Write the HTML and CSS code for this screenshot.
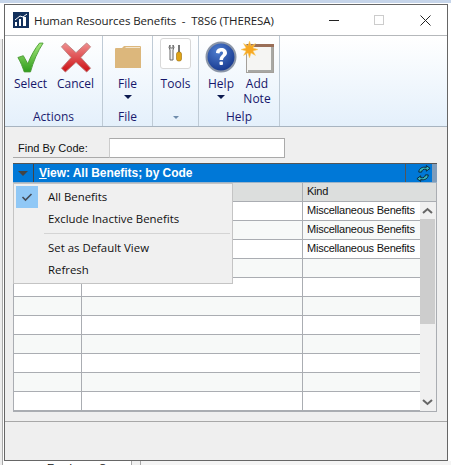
FILE: index.html
```html
<!DOCTYPE html>
<html lang="en">
<head>
    <meta charset="UTF-8">
    <meta name="viewport" content="width=device-width, initial-scale=1.0">
    <title>Human Resources Benefits</title>
    <link rel="stylesheet" href="styles.css">
</head>
<body>
    <div class="behind-top"></div>
    <div class="behind-left"></div>
    <div class="behind-bottom">
        <span class="behind-label">Employee S</span>
    </div>

    <div class="window">
        <div class="titlebar">
            <svg class="app-icon" width="16" height="16" viewBox="0 0 16 16">
                <rect width="16" height="16" fill="#12305c"/>
                <path d="M2 14V10H4V14ZM6 14V7H8V14ZM10 14V5H13V14Z" fill="#fff"/>
                <path d="M2 8L7 4L10 5L14 2" stroke="#fff" fill="none"/>
            </svg>
            <div class="title">Human Resources Benefits &nbsp;-&nbsp; T8S6 (THERESA)</div>
            <div class="win-buttons">
                <span class="win-min"></span>
                <span class="win-max"></span>
                <svg class="win-close" width="11" height="11" viewBox="0 0 11 11"><path d="M.5.5L10.5 10.5M10.5.5L.5 10.5" stroke="#222" fill="none"/></svg>
            </div>
        </div>

        <div class="ribbon">
            <div class="group group-actions">
                <div class="group-items">
                    <div class="tool">
                        <div class="tool-icon">
                            <svg width="27" height="31" viewBox="0 0 30 34">
                                <defs>
                                    <linearGradient id="green" x1="0" y1="0" x2="0" y2="1">
                                        <stop offset="0" stop-color="#a6ea7c"/>
                                        <stop offset="1" stop-color="#2f9c1c"/>
                                    </linearGradient>
                                </defs>
                                <path d="M1 17L7 15L12 24C15 16 20 7 25 1L29 1C23 10 18 22 15 33L8 33C6 27 4 22 1 17Z" fill="url(#green)" stroke="#4a9a34"/>
                            </svg>
                        </div>
                        <span>Select</span>
                    </div>
                    <div class="tool">
                        <div class="tool-icon">
                            <svg width="32" height="31" viewBox="0 0 32 32">
                                <defs>
                                    <linearGradient id="red" x1="0" y1="0" x2="0" y2="1">
                                        <stop offset="0" stop-color="#f09090"/>
                                        <stop offset="1" stop-color="#cc0f14"/>
                                    </linearGradient>
                                </defs>
                                <path d="M5 1L16 11L27 1L31 5L21 16L31 27L27 31L16 21L5 31L1 27L11 16L1 5Z" fill="url(#red)" stroke="#c08080" stroke-linejoin="round"/>
                            </svg>
                        </div>
                        <span>Cancel</span>
                    </div>
                </div>
                <div class="group-label">Actions</div>
            </div>

            <div class="group group-file">
                <div class="group-items">
                    <div class="tool">
                        <div class="tool-icon">
                            <svg width="28" height="24" viewBox="0 0 28 24">
                                <path d="M1 4Q1 3 2 3H8L10 1H26Q27 1 27 2V23H1Z" fill="#dcb77c"/>
                                <path d="M11 3L12 2H26V3Z" fill="#f3e6cf"/>
                            </svg>
                        </div>
                        <span>File</span>
                        <i class="caret"></i>
                    </div>
                </div>
                <div class="group-label">File</div>
            </div>

            <div class="group group-tools">
                <div class="group-items">
                    <div class="tool">
                        <div class="tool-icon">
                            <div class="tools-box">
                                <svg width="18" height="18" viewBox="0 0 18 18">
                                    <path d="M3 1V4H6V1Q8 3 6 6V16H3V6Q1 3 3 1Z" fill="#f4f4f4" stroke="#666"/>
                                    <rect x="11" y="1" width="2" height="7" fill="#777"/>
                                    <rect x="9.500" y="8" width="5" height="9" rx="2" fill="#e0a414" stroke="#9a6c0a" stroke-width=".6"/>
                                </svg>
                            </div>
                        </div>
                        <span>Tools</span>
                    </div>
                </div>
                <div class="group-label"><i class="caret caret-small"></i></div>
            </div>

            <div class="group group-help">
                <div class="group-items">
                    <div class="tool tool-help">
                        <div class="tool-icon">
                            <svg width="32" height="32" viewBox="0 0 32 32">
                                <defs>
                                    <radialGradient id="blue" cx=".4" cy=".3" r=".8">
                                        <stop offset="0" stop-color="#4f7fd0"/>
                                        <stop offset="1" stop-color="#0f2f86"/>
                                    </radialGradient>
                                </defs>
                                <circle cx="16" cy="16" r="14.500" fill="url(#blue)" stroke="#8b96a8" stroke-width="2"/>
                                <path d="M11 12C11 8 14 7 16.500 7C19.500 7 22 9 22 12C22 15 18 16 18 19H14.500C14.500 15 18 14 18 12C18 11 17.500 10.500 16.500 10.500C15 10.500 14.500 11.500 14.500 12.500Z" fill="#fff"/>
                                <rect x="14.500" y="20.500" width="3.500" height="3.500" rx="1" fill="#fff"/>
                            </svg>
                        </div>
                        <span>Help</span>
                        <i class="caret"></i>
                    </div>
                    <div class="tool tool-note">
                        <div class="tool-icon">
                            <svg width="33" height="32" viewBox="0 0 33 32">
                                <rect x="5.500" y="3.500" width="27" height="28" fill="#f5f5f3" stroke="#a4a09a" stroke-width="1"/>
                                <path d="M30 6H32V31H7V29H30Z" fill="#a8a8a4"/>
                                <rect x="6" y="3" width="27" height="3" fill="#9a6f58"/>
                                <path d="M8.500 0L10 5L14.500 2.500L12 7L17 8.500L12 10L14.500 14.500L10 12L8.500 17L7 12L2.500 14.500L5 10L0 8.500L5 7L2.500 2.500L7 5Z" fill="#f7a823" stroke="#f9cf6b" stroke-width=".5"/>
                            </svg>
                        </div>
                        <span>Add<br>Note</span>
                    </div>
                </div>
                <div class="group-label">Help</div>
            </div>
        </div>

        <div class="content">
            <div class="find-row">
                <label class="find-label">Find By Code:</label>
                <div class="find-input"></div>
            </div>

            <div class="grid-panel">
                <div class="view-bar">
                    <div class="view-arrow"><i></i></div>
                    <div class="view-title"><u>V</u>iew: All Benefits; by Code</div>
                    <div class="view-refresh">
                        <svg width="15" height="17" viewBox="0 0 16 17">
                            <path d="M3 7C3 3 7 1 11 2L11 0L15 3L11 6V4C8 3.500 6 5 6 7Z" fill="#36b4bc" stroke="#0c2233"/>
                            <path d="M13 10C13 14 9 16 5 15L5 17L1 14L5 11V13C8 13.500 10 12 10 10Z" fill="#36b4bc" stroke="#0c2233"/>
                        </svg>
                    </div>
                </div>
                <div class="grid-body">
                    <div class="grid-main">
                        <div class="grid-row grid-head">
                            <div></div><div></div><div class="cell-pad">Kind</div>
                        </div>
                        <div class="grid-row"><div></div><div></div><div class="cell-pad">Miscellaneous Benefits</div></div>
                        <div class="grid-row alt"><div></div><div></div><div class="cell-pad">Miscellaneous Benefits</div></div>
                        <div class="grid-row"><div></div><div></div><div class="cell-pad">Miscellaneous Benefits</div></div>
                        <div class="grid-row alt"><div></div><div></div><div></div></div>
                        <div class="grid-row"><div></div><div></div><div></div></div>
                        <div class="grid-row alt"><div></div><div></div><div></div></div>
                        <div class="grid-row"><div></div><div></div><div></div></div>
                        <div class="grid-row alt"><div></div><div></div><div></div></div>
                        <div class="grid-row"><div></div><div></div><div></div></div>
                        <div class="grid-row alt"><div></div><div></div><div></div></div>
                        <div class="grid-row"><div></div><div></div><div></div></div>
                    </div>
                    <div class="scrollbar">
                        <div class="scroll-head"></div>
                        <div class="scroll-btn">
                            <svg width="11" height="7" viewBox="0 0 11 7"><path d="M1 6L5.500 2L10 6" stroke="#666" stroke-width="2" fill="none"/></svg>
                        </div>
                        <div class="scroll-thumb"></div>
                        <div class="scroll-track"></div>
                        <div class="scroll-btn">
                            <svg width="11" height="7" viewBox="0 0 11 7"><path d="M1 1L5.500 5L10 1" stroke="#666" stroke-width="2" fill="none"/></svg>
                        </div>
                    </div>
                </div>

                <div class="view-menu">
                    <div class="menu-item">
                        <div class="menu-check">
                            <svg width="12" height="10" viewBox="0 0 12 10"><path d="M1.500 5L4.500 8L10.500 2" stroke="#444c58" stroke-width="1.600" fill="none"/></svg>
                        </div>
                        <span>All Benefits</span>
                    </div>
                    <div class="menu-item"><div class="menu-gutter"></div><span>Exclude Inactive Benefits</span></div>
                    <div class="menu-sep"></div>
                    <div class="menu-item"><div class="menu-gutter"></div><span>Set as Default View</span></div>
                    <div class="menu-item"><div class="menu-gutter"></div><span>Refresh</span></div>
                </div>
            </div>
        </div>

        <div class="footer"></div>
    </div>
</body>
</html>
```

FILE: styles.css
```css
html, body {
    margin: 0;
    padding: 0;
}
body {
    position: relative;
    width: 451px;
    height: 465px;
    overflow: hidden;
    background-color: #fff;
    font-family: 'Liberation Sans', Arial, sans-serif;
    font-size: 12px;
    color: #111;
    box-sizing: border-box;
    padding: 4px 3px 4px 4px;
}
/* bits of the window underneath */
.behind-top {
    position: absolute;
    left: 0;
    top: 0;
    width: 100%;
    height: 3px;
    background-color: #c6d5ea;
}
.behind-left {
    position: absolute;
    left: 0;
    top: 39px;
    width: 3px;
    height: 426px;
    box-sizing: border-box;
    background-color: #ededed;
    border-right: 1px solid #a8a8a8;
}
.behind-bottom {
    position: absolute;
    left: 4px;
    top: 461px;
    width: 447px;
    height: 4px;
    overflow: hidden;
    background: linear-gradient(to right, #fff 127px, #a8a8a8 127px, #a8a8a8 128px, #f0f0f0 128px, #f0f0f0 136px, #a8a8a8 136px, #a8a8a8 137px, #f4f4f4 137px);
}
.behind-label {
    position: absolute;
    left: 43px;
    top: 1px;
    font-size: 11px;
    line-height: 13px;
    white-space: nowrap;
}
.window {
    position: relative;
    width: 444px;
    height: 457px;
    box-sizing: border-box;
    border: 1px solid #666;
    background-color: #efefef;
    display: flex;
    flex-direction: column;
}
.titlebar {
    height: 31px;
    flex: none;
    box-sizing: border-box;
    display: flex;
    align-items: center;
    background-color: #fff;
    border-bottom: 1px solid #b5b8bb;
    padding-left: 8px;
}
.app-icon {
    flex: none;
}
.title {
    margin-left: 5px;
    font-family: 'Open Sans', sans-serif;
    font-size: 11.500px;
    letter-spacing: -0.1px;
    color: #222;
    white-space: nowrap;
    flex: 1;
}
.win-buttons {
    display: flex;
    align-items: center;
    gap: 35px;
    padding-right: 16px;
}
.win-min {
    width: 10px;
    height: 1px;
    background-color: #222;
}
.win-max {
    width: 8px;
    height: 8px;
    border: 1px solid #ccc;
}
.win-close {
    margin-left: 1px;
}
.ribbon {
    height: 91px;
    flex: none;
    display: flex;
    background: linear-gradient(#fff, #e4f0fb);
    border-bottom: 1px solid #a8b4c0;
    box-sizing: border-box;
}
.group {
    display: flex;
    flex-direction: column;
    border-right: 1px solid #bfcbd6;
    box-sizing: border-box;
}
.group-actions { width: 98px; }
.group-file { width: 50px; }
.group-tools { width: 46px; }
.group-help { width: 81px; }
.group-items {
    flex: 1;
    display: flex;
    justify-content: center;
}
.group-actions .group-items {
    justify-content: flex-start;
    padding-left: 3px;
}
.group-actions .tool { width: 45px; }
.group-help .group-items {
    justify-content: flex-start;
    padding-left: 6px;
}
.group-label {
    height: 18px;
    line-height: 18px;
    text-align: center;
    font-family: 'Open Sans', sans-serif;
    font-size: 12px;
    color: #1a1a6e;
}
.tool {
    display: flex;
    flex-direction: column;
    align-items: center;
    font-family: 'Open Sans', sans-serif;
    font-size: 12px;
    line-height: 15px;
    color: #16166a;
    text-align: center;
    padding-top: 1px;
}
.tool svg { display: block; }
.tool span { margin-top: -1px; }
.tool-icon {
    height: 40px;
    display: flex;
    align-items: center;
    justify-content: center;
}
.tools-box {
    width: 31px;
    height: 31px;
    box-sizing: border-box;
    margin-bottom: 8px;
    border: 1px solid #d8d8d8;
    border-radius: 3px;
    background-color: #fff;
    display: flex;
    align-items: center;
    justify-content: center;
}
.tool-help { width: 32px; }
.tool-note { width: 40px; }
.caret {
    display: block;
    width: 0;
    height: 0;
    margin-top: 4px;
    border-left: 4px solid transparent;
    border-right: 4px solid transparent;
    border-top: 4px solid #0c1a50;
}
.caret-small {
    margin: 8px auto 0;
    border-left-width: 3px;
    border-right-width: 3px;
    border-top: 3px solid #6f8cab;
}
.content {
    height: 295px;
    flex: none;
    box-sizing: border-box;
    padding: 11px 11px 0 8px;
    border-bottom: 1px solid #a8a8a8;
}
.find-row {
    display: flex;
    align-items: flex-end;
    height: 20px;
    margin-bottom: 5px;
}
.find-label {
    width: 96px;
    height: 20px;
    line-height: 20px;
    padding-left: 5px;
    box-sizing: border-box;
    border-bottom: 1px solid #aaa;
    font-size: 11px;
}
.find-input {
    width: 176px;
    height: 20px;
    box-sizing: border-box;
    background-color: #fff;
    border: 1px solid #aaa;
    border-left-color: #ccc;
}
.grid-panel {
    position: relative;
    width: 424px;
}
.view-bar {
    height: 20px;
    display: flex;
    align-items: stretch;
    background-color: #0078d7;
    box-sizing: border-box;
    border-top: 1px solid #555;
    border-bottom: 1px solid #9db4c8;
}
.view-arrow {
    width: 20px;
    flex: none;
    display: flex;
    align-items: center;
    justify-content: center;
}
.view-arrow i {
    display: block;
    width: 0;
    height: 0;
    border-left: 5px solid transparent;
    border-right: 5px solid transparent;
    border-top: 5px solid #444;
}
.view-title {
    flex: 1;
    border-left: 1px solid #444;
    padding-left: 5px;
    line-height: 18px;
    color: #fff;
    font-weight: bold;
    font-size: 12px;
    letter-spacing: -0.05px;
}
.view-refresh {
    width: 32px;
    flex: none;
    box-sizing: border-box;
    border-left: 1px solid #555;
    padding-left: 10px;
    display: flex;
    align-items: center;
    background: linear-gradient(to right, #0078d7 26px, #7f9cba 26px);
}
.grid-body {
    display: flex;
    height: 229px;
    background-color: #f0f0f0;
    border: 1px solid #aaadb2;
    border-top: 0;
    box-sizing: border-box;
}
.grid-main {
    width: 406px;
    flex: none;
    align-self: flex-start;
}
.grid-row {
    display: grid;
    grid-template-columns: 67px 221px 1fr;
    height: 19px;
    box-sizing: border-box;
    background-color: #fff;
    border-bottom: 1px solid #aaadb2;
    font-size: 11px;
    line-height: 17px;
}
.grid-row div + div {
    border-left: 1px solid #aaadb2;
}
.grid-row.alt { background-color: #f7f9f8; }
.grid-head {
    background-color: #dcdedd;
}
.cell-pad {
    padding-left: 4px;
    white-space: nowrap;
    letter-spacing: -0.22px;
}
.scrollbar {
    flex: 1;
    display: flex;
    flex-direction: column;
    padding-right: 1px;
}
.scroll-head {
    height: 19px;
    flex: none;
    background-color: #dcdedd;
    border-bottom: 1px solid #aaadb2;
    box-sizing: border-box;
    margin-right: -1px;
}
.scroll-btn {
    height: 17px;
    flex: none;
    display: flex;
    align-items: center;
    justify-content: center;
    background-color: #f0f0f0;
}
.scroll-thumb {
    height: 105px;
    flex: none;
    background-color: #cdcdcd;
}
.scroll-track {
    flex: 1;
    background-color: #f0f0f0;
}
.view-menu {
    position: absolute;
    left: 0;
    top: 20px;
    width: 220px;
    box-sizing: border-box;
    background-color: #f0f0f0;
    border: 1px solid #c4c4c4;
    padding: 2px;
    font-family: 'Open Sans', sans-serif;
    font-size: 11.400px;
    color: #111;
}
.menu-item {
    display: flex;
    align-items: center;
    height: 22px;
}
.menu-item span {
    margin-bottom: 2px;
}
.menu-check, .menu-gutter {
    width: 22px;
    height: 22px;
    flex: none;
    margin-right: 10px;
}
.menu-check {
    background-color: #90c8f6;
    display: flex;
    align-items: center;
    justify-content: center;
}
.menu-sep {
    height: 1px;
    margin: 3px 0 3px 28px;
    background-color: #d4d4d4;
}
.footer {
    flex: 1;
}
```
